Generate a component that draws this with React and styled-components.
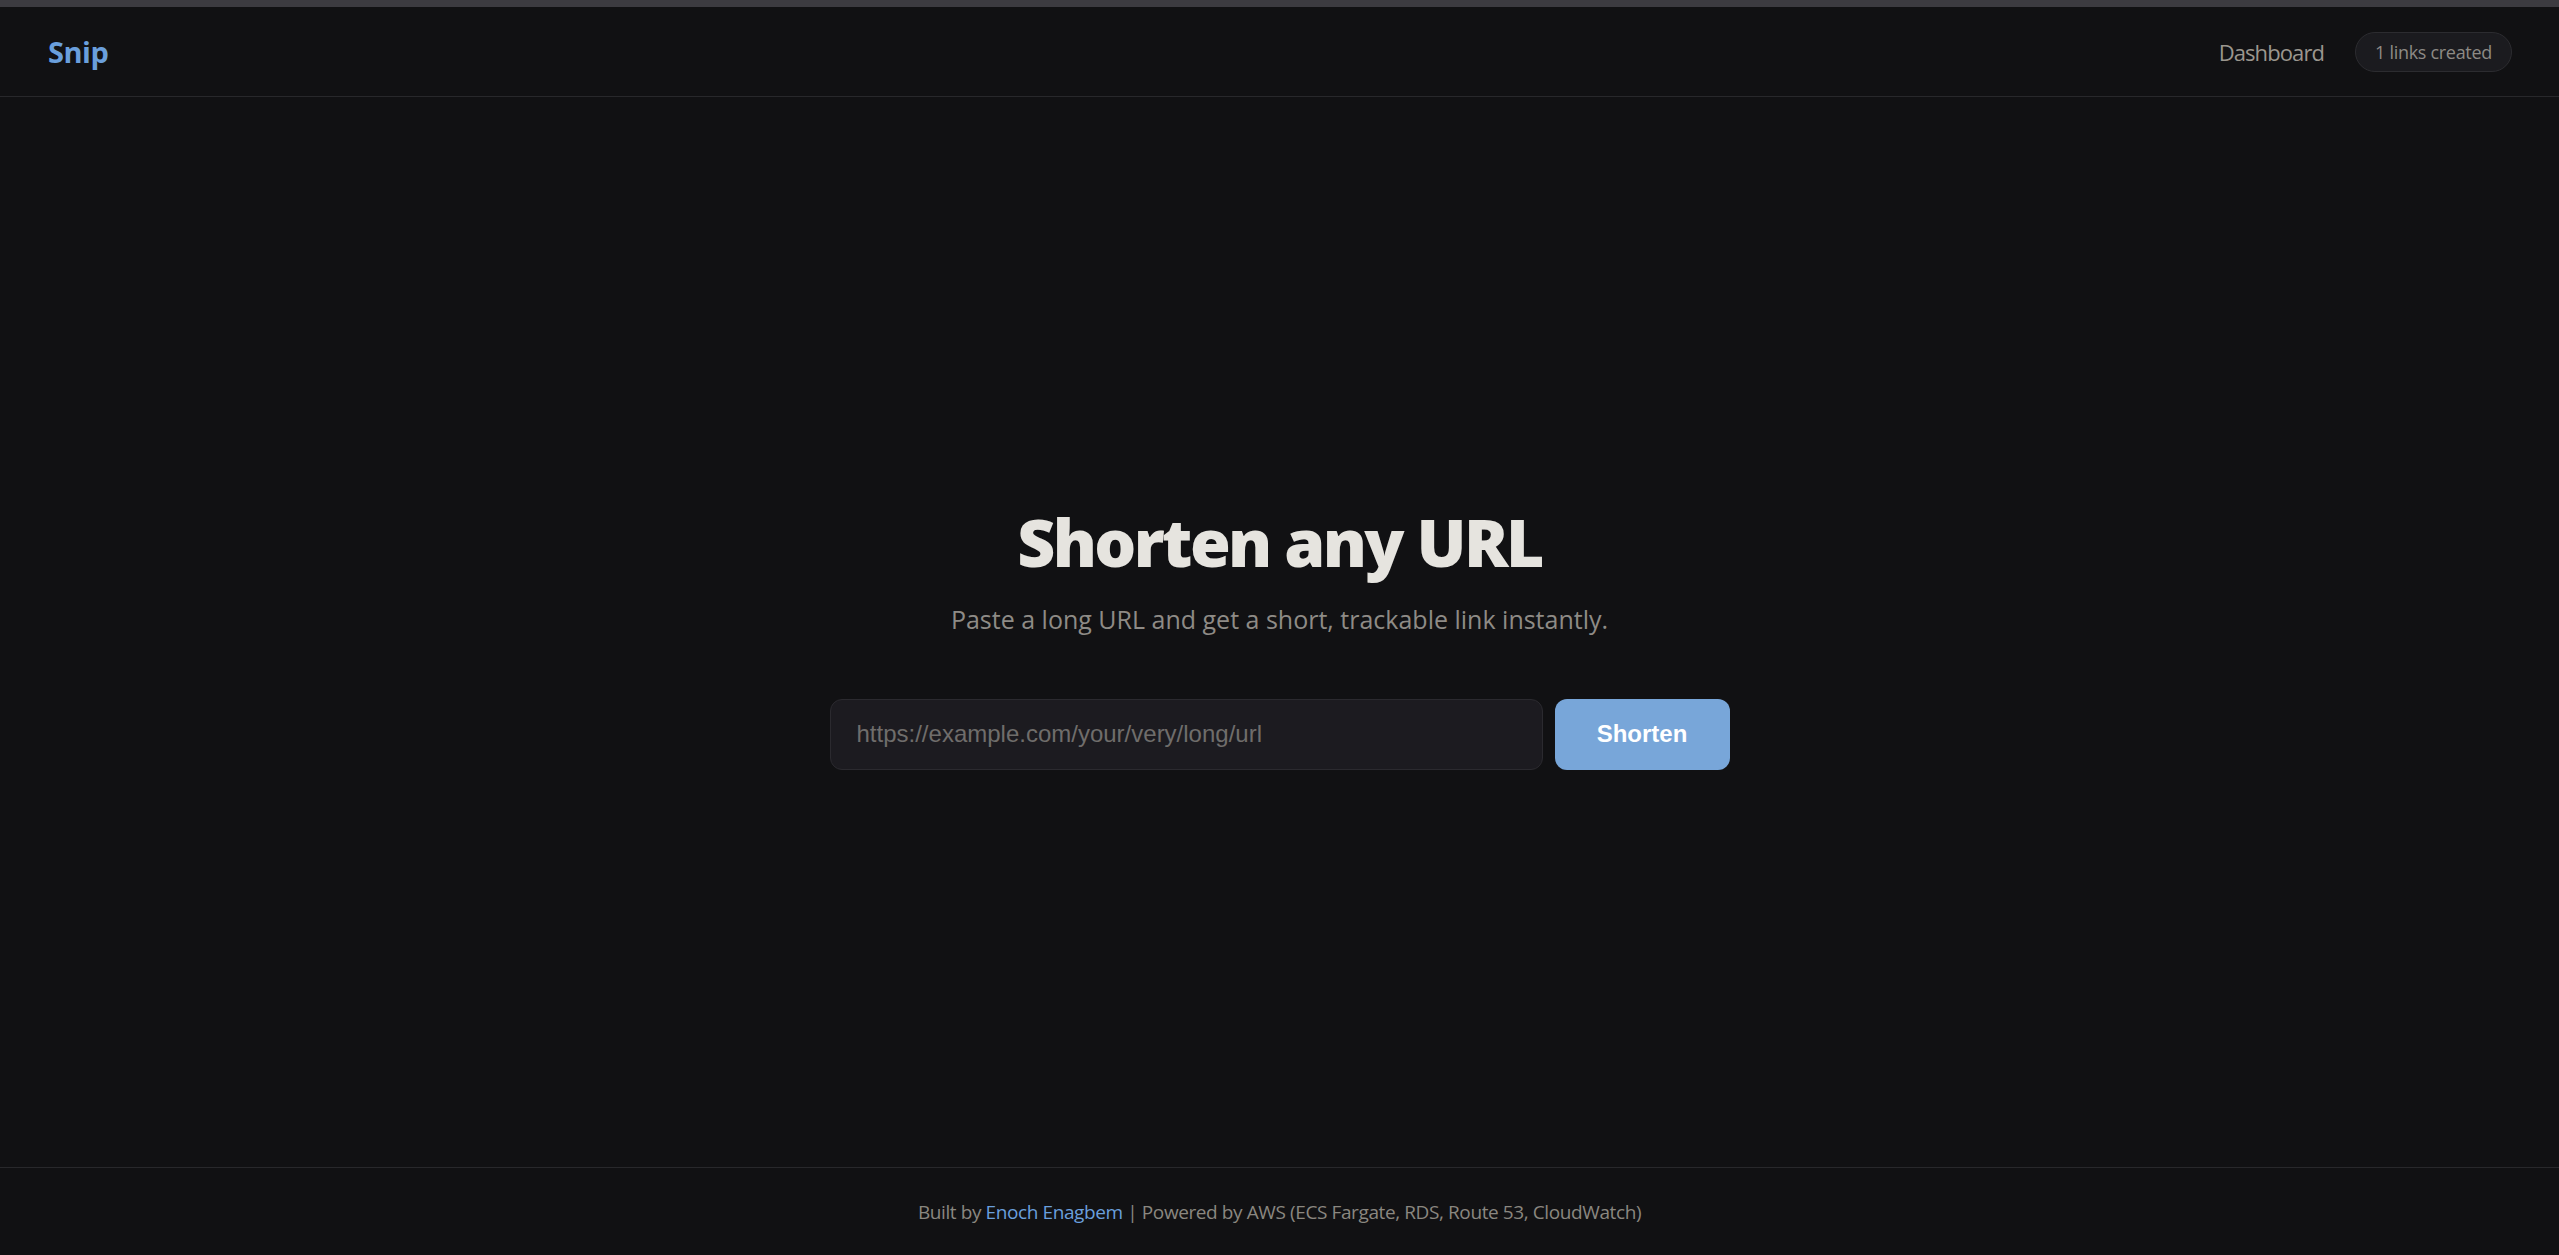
import React, { useState } from "react";
import styled, { createGlobalStyle } from "styled-components";

const GlobalStyle = createGlobalStyle`
  html, body {
    margin: 0;
    padding: 0;
    background: #111113;
  }
  body {
    font-family: "Open Sans", "Noto Sans", sans-serif;
  }
  * {
    box-sizing: border-box;
  }
`;

const Page = styled.div`
  min-height: 100vh;
  display: flex;
  flex-direction: column;
  background: #111113;
  color: #e6e4df;
`;

const TopStrip = styled.div`
  height: 7px;
  background: #3c3b40;
`;

const Header = styled.header`
  height: 90px;
  display: flex;
  align-items: center;
  justify-content: space-between;
  padding: 0 47px 0 48px;
  border-bottom: 1px solid #28282b;
`;

const Logo = styled.a`
  font-size: 29px;
  font-weight: 700;
  color: #6a9fdc;
  text-decoration: none;
  letter-spacing: -0.5px;
`;

const Nav = styled.nav`
  display: flex;
  align-items: center;
  gap: 31px;
`;

const NavLink = styled.a`
  font-size: 22px;
  color: #9b968e;
  text-decoration: none;
  letter-spacing: -0.9px;
`;

const Pill = styled.span`
  display: inline-flex;
  align-items: center;
  height: 40px;
  padding: 0 19px;
  border-radius: 999px;
  background: #1b1b1f;
  border: 1px solid #2c2c30;
  font-size: 18px;
  color: #8d8a85;
  letter-spacing: -0.3px;
`;

const Main = styled.main`
  flex: 1;
  display: flex;
  flex-direction: column;
  align-items: center;
  justify-content: center;
  padding-top: 6px;
`;

const Title = styled.h1`
  margin: 0;
  font-size: 66px;
  font-weight: 800;
  line-height: 1.25;
  letter-spacing: -2.6px;
  color: #e6e4df;
`;

const Subtitle = styled.p`
  margin: 19px 0 0;
  font-size: 25px;
  color: #8e8b86;
  letter-spacing: 0;
`;

const Form = styled.form`
  margin-top: 63px;
  width: 900px;
  display: flex;
  gap: 12px;
`;

const UrlInput = styled.input`
  flex: 1;
  height: 71px;
  padding: 0 26px;
  border-radius: 12px;
  border: 1px solid #2b2a2f;
  background: #1c1b20;
  color: #e6e4df;
  font-family: "Liberation Sans", Arial, sans-serif;
  font-size: 24px;
  outline: none;

  &::placeholder {
    color: #6f6d6b;
  }
`;

const SubmitButton = styled.button`
  width: 175px;
  height: 71px;
  border: none;
  border-radius: 12px;
  background: #78a6d9;
  color: #ffffff;
  font-family: "Liberation Sans", Arial, sans-serif;
  font-size: 24px;
  font-weight: 700;
  cursor: pointer;
`;

const Footer = styled.footer`
  height: 88px;
  display: flex;
  align-items: center;
  justify-content: center;
  border-top: 1px solid #28282b;
  font-size: 19px;
  color: #8a8780;
  letter-spacing: -0.4px;
`;

const FooterLink = styled.a`
  color: #6a9fdc;
  text-decoration: none;
`;

export default function App() {
  const [url, setUrl] = useState("");

  return (
    <>
      <GlobalStyle />
      <Page>
        <TopStrip />
        <Header>
          <Logo href="#">Snip</Logo>
          <Nav>
            <NavLink href="#">Dashboard</NavLink>
            <Pill>1 links created</Pill>
          </Nav>
        </Header>
        <Main>
          <Title>Shorten any URL</Title>
          <Subtitle>Paste a long URL and get a short, trackable link instantly.</Subtitle>
          <Form onSubmit={(e) => e.preventDefault()}>
            <UrlInput
              type="url"
              value={url}
              onChange={(e) => setUrl(e.target.value)}
              placeholder="https://example.com/your/very/long/url"
            />
            <SubmitButton type="submit">Shorten</SubmitButton>
          </Form>
        </Main>
        <Footer>
          <span>
            Built by <FooterLink href="#">Enoch Enagbem</FooterLink> | Powered by AWS (ECS
            Fargate, RDS, Route 53, CloudWatch)
          </span>
        </Footer>
      </Page>
    </>
  );
}
